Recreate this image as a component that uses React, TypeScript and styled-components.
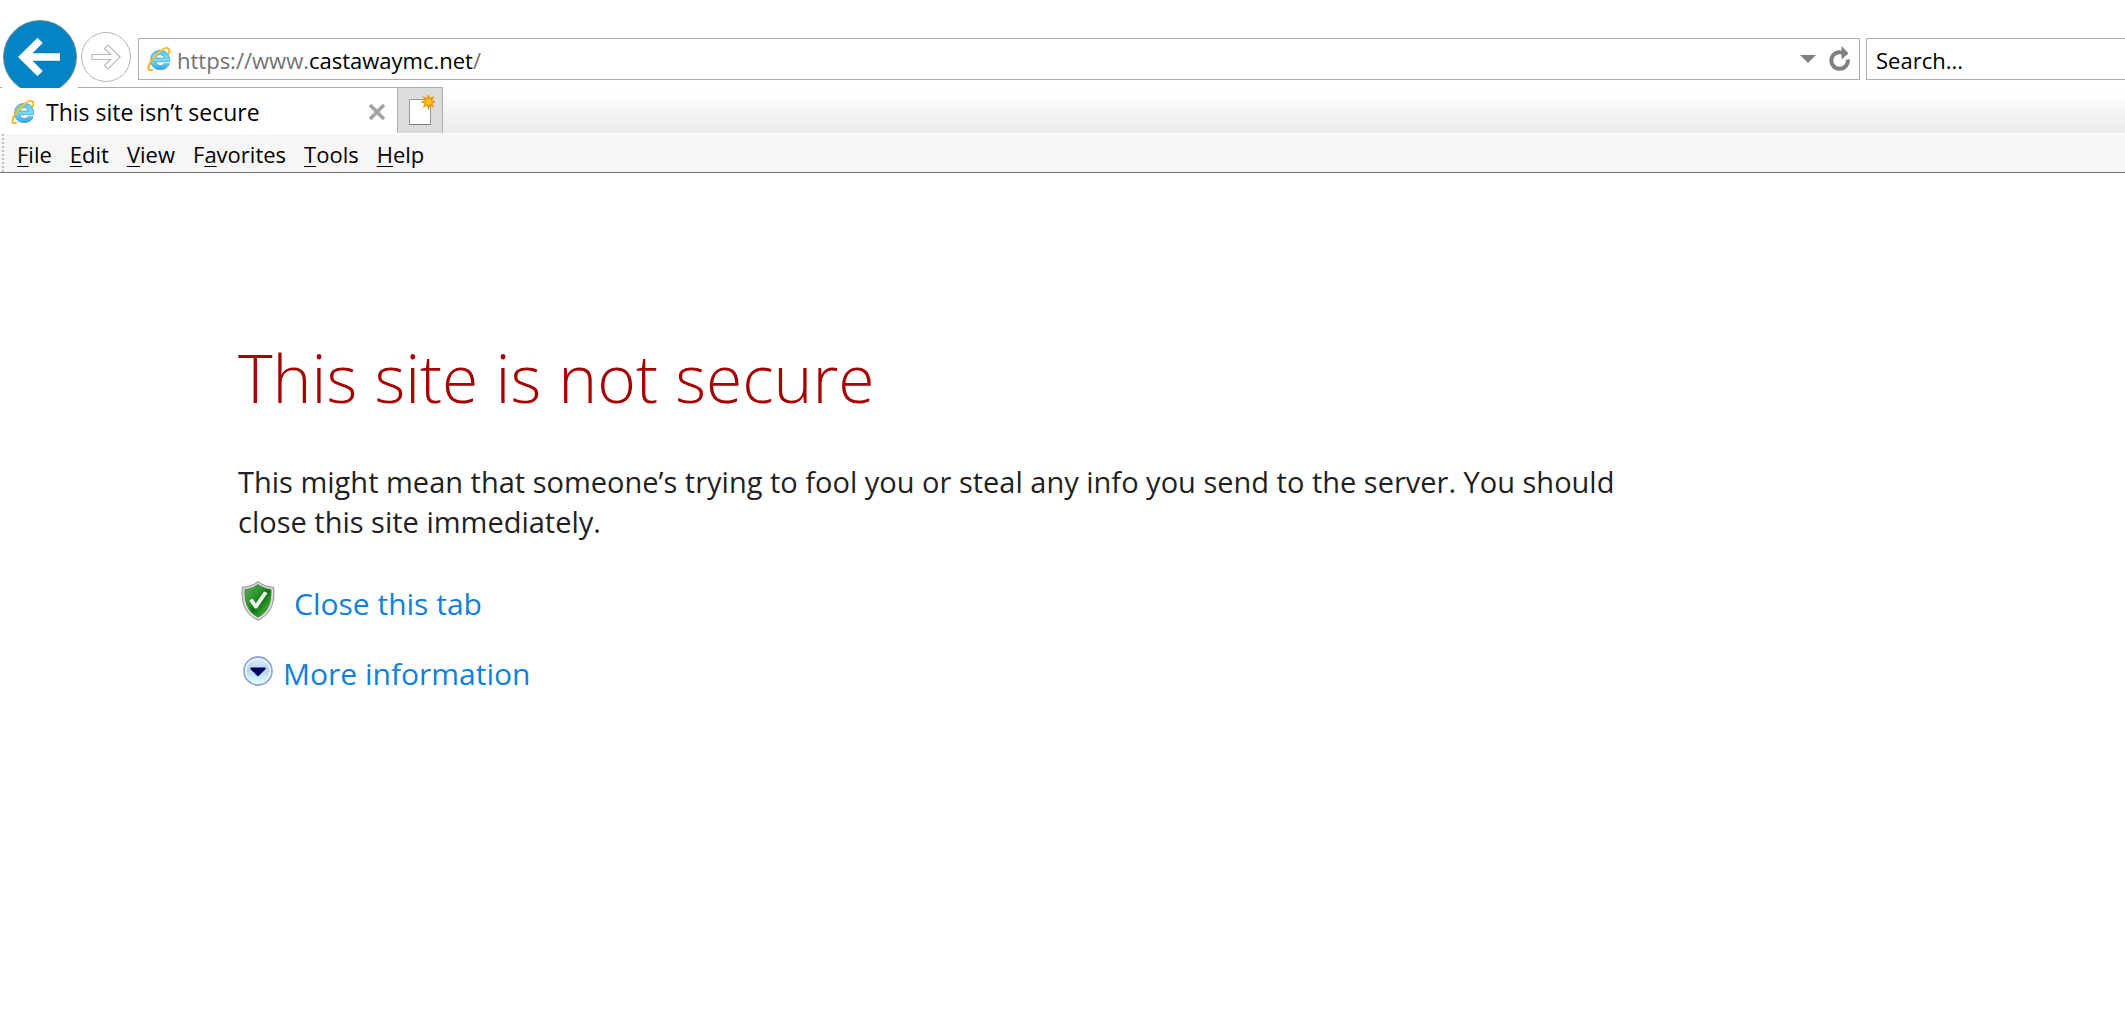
import React from "react";
import styled, { createGlobalStyle } from "styled-components";

const Global = createGlobalStyle`
  * { box-sizing: border-box; }
  body {
    margin: 0;
    background: #fff;
    color: #000;
    font-family: "Open Sans", "Noto Sans", sans-serif;
    font-size: 22px;
  }
  button, input { font: inherit; color: inherit; }
`;

const PlainButton = styled.button`
  display: flex;
  align-items: center;
  justify-content: center;
  flex: none;
  padding: 0;
  border: 0;
  background: none;
  cursor: pointer;
`;

const NavBar = styled.div`
  display: flex;
  align-items: flex-start;
  height: 87px;
  padding-left: 2px;
`;

const BackSlot = styled.div`
  position: relative;
  z-index: 1;
  flex: none;
  width: 76px;
  height: 88px;
  padding: 20px 1px 0;
  overflow: hidden;
  background: #fff;
`;

const BackButton = styled(PlainButton)`
  width: 74px;
  height: 74px;
  padding-right: 2px;
  border: 1px solid #7a8a94;
  border-radius: 50%;
  background: #0384c4;
`;

const ForwardButton = styled(PlainButton)`
  width: 50px;
  height: 50px;
  margin: 32px 7px 0 3px;
  border: 1px solid #b5b5b5;
  border-radius: 50%;
`;

const Field = styled.div`
  display: flex;
  align-items: center;
  height: 42px;
  margin-top: 38px;
  border: 1px solid #adadad;
  background: #fff;
`;

const AddressField = styled(Field)`
  flex: 1;
  min-width: 0;
  gap: 6px;
  padding: 0 8px;
`;

const Address = styled.div`
  flex: 1;
  min-width: 0;
  padding-top: 2px;
  overflow: hidden;
  white-space: nowrap;
  line-height: 38px;
  color: #737373;
  outline: none;
`;

const Host = styled.span`
  color: #000;
`;

const FieldActions = styled.div`
  display: flex;
  align-items: center;
  gap: 13px;
`;

const SearchField = styled(Field)`
  flex: none;
  width: 259px;
  margin-left: 6px;
  border-right: 0;
`;

const SearchInput = styled.input`
  width: 100%;
  height: 40px;
  padding: 2px 9px 0;
  border: 0;
  outline: none;
  background: none;
  &::placeholder { color: #000; opacity: 1; }
`;

const TabStrip = styled.div`
  display: flex;
  height: 47px;
  border-bottom: 1px solid #fff;
  background: linear-gradient(#fff 8%, #ebebeb);
`;

const Tab = styled.div`
  display: flex;
  align-items: center;
  gap: 11px;
  width: 397px;
  padding: 2px 11px 0;
  border-top: 1px solid #adadad;
  background: #fff;
`;

const TabTitle = styled.span`
  flex: 1;
  font-size: 23px;
  white-space: nowrap;
`;

const NewTabButton = styled(PlainButton)`
  width: 46px;
  border: 1px solid #adadad;
  border-bottom: 0;
  background: #dcdcdc;
`;

const MenuBar = styled.nav`
  display: flex;
  align-items: center;
  gap: 18px;
  height: 39px;
  padding-left: 2px;
  border-bottom: 1px solid #6f6f6f;
  background: #f6f6f6;
`;

const Grip = styled.span`
  align-self: stretch;
  margin-right: -5px;
  border-left: 2px dotted #bdbdbd;
`;

const MenuItem = styled(PlainButton)`
  display: block;
  padding-top: 2px;
  line-height: 36px;
  u { text-underline-offset: 3px; text-decoration-thickness: 1px; }
`;

const Page = styled.main`
  max-width: 1640px;
  padding: 154px 0 0 238px;
`;

const Title = styled.h1`
  margin: 0;
  font-size: 66px;
  font-weight: 300;
  line-height: 100px;
  color: #a80000;
`;

const Message = styled.p`
  margin: 35px 0 24px;
  font-size: 29px;
  line-height: 40px;
  color: #1f1f1f;
`;

const Action = styled.div`
  display: flex;
  align-items: center;
  height: 70px;
  font-size: 30px;
`;

const ActionIcon = styled.span<{ $gap: number }>`
  display: flex;
  justify-content: center;
  width: 40px;
  margin-right: ${(p) => p.$gap}px;
`;

const ActionLink = styled.a`
  color: #0f80dd;
  line-height: 40px;
  padding-top: 6px;
  text-decoration: none;
`;

function ExplorerIcon({ id }: { id: string }) {
  return (
    <svg width="24" height="24" viewBox="0 0 24 24" aria-hidden="true">
      <defs>
        <linearGradient id={id} x1="0" y1="0" x2="0" y2="1">
          <stop offset="0" stopColor="#5cc4f0" />
          <stop offset="0.5" stopColor="#7adcfc" />
          <stop offset="1" stopColor="#2fa4e0" />
        </linearGradient>
      </defs>
      <path
        d="M22.6 14.8H9c.3 2.200 2 3.600 4.300 3.600 1.700 0 2.900-.6 3.600-1.700h5.300c-1.200 3.700-4.600 6-9 6-5.600 0-9.600-3.900-9.600-9.700S7.600 3.300 13.100 3.300c5.700 0 9.600 4 9.600 9.900zM9 11h8.200c-.3-2-1.900-3.300-4.100-3.300S9.400 9 9 11z"
        fill={`url(#${id})`}
        stroke="#3d95cc"
        strokeWidth="0.7"
      />
      <path
        d="M21.900 6.200c.9-2.700.5-4.800-1.300-5.100C17 .5 10.400 5.200 6 11.400 2.200 16.700.5 21.700 2.200 23c.7.5 1.800.3 3-.3"
        fill="none"
        stroke="#f3b51b"
        strokeWidth="1.900"
        strokeLinecap="round"
      />
      <path d="M20 1.300C16.500 1.500 11 5.500 7 10.500" fill="none" stroke="#ffdc4a" strokeWidth="1" />
    </svg>
  );
}

function ShieldIcon() {
  return (
    <svg width="34" height="40" viewBox="0 0 34 40" aria-hidden="true">
      <defs>
        <linearGradient id="shield" x1="0" y1="0" x2="1" y2="1">
          <stop offset="0" stopColor="#5fb057" />
          <stop offset="0.4" stopColor="#27922a" />
          <stop offset="0.55" stopColor="#08740b" />
          <stop offset="1" stopColor="#6fd05c" />
        </linearGradient>
      </defs>
      <path
        d="M17 .7C13 4 7 6 1.300 6.300.2 21 3 32.500 17 39.300 31 32.500 33.800 21 32.700 6.300 27 6 21 4 17 .7z"
        fill="#d9d9d9"
        stroke="#8c8c8c"
        strokeWidth="1"
      />
      <path
        d="M17 3.600c-4 2.800-8.500 4.500-13 5C3.600 20.500 6 30.300 17 36.200 28 30.300 30.400 20.500 30 8.600c-4.500-.5-9-2.200-13-5z"
        fill="url(#shield)"
        stroke="#47803f"
        strokeWidth="0.8"
      />
      <path d="M8.300 19.600l3.200-2 3.300 4.600L23 10.400l3.600 1.700L16 27.400h-2.300z" fill="#f1f1f1" />
    </svg>
  );
}

function ExpandIcon() {
  return (
    <svg width="30" height="30" viewBox="0 0 30 30" aria-hidden="true">
      <defs>
        <linearGradient id="orb" x1="0" y1="0" x2="0" y2="1">
          <stop offset="0" stopColor="#dce9fa" />
          <stop offset="0.45" stopColor="#b5d5ee" />
          <stop offset="1" stopColor="#d7fbff" />
        </linearGradient>
      </defs>
      <circle cx="15" cy="15" r="14" fill="#f2f8ff" stroke="#8fa9d6" strokeWidth="1.800" />
      <circle cx="15" cy="15" r="11.500" fill="url(#orb)" />
      <path d="M7.500 11.500h15v1.800L15 20.500l-7.500-7.200z" fill="#00005f" />
    </svg>
  );
}

const menus: [string, string, string][] = [
  ["", "F", "ile"],
  ["", "E", "dit"],
  ["", "V", "iew"],
  ["F", "a", "vorites"],
  ["", "T", "ools"],
  ["", "H", "elp"],
];

export default function App() {
  return (
    <>
      <Global />
      <header>
        <NavBar>
          <BackSlot>
            <BackButton aria-label="Back">
              <svg width="42" height="40" viewBox="0 0 42 40" aria-hidden="true">
                <path d="M0 20L19.300 1h.4l5 5L14.500 16.300H42v7.400H14.500L24.700 34l-5 5h-.4z" fill="#fff" />
              </svg>
            </BackButton>
          </BackSlot>
          <ForwardButton aria-label="Forward">
            <svg width="30" height="26" viewBox="0 0 30 26" aria-hidden="true">
              <path
                d="M29 13L17 1l-3.500 3.500 6 6H1v5h18.500l-6 6L17 25z"
                fill="none"
                stroke="#b9b9b9"
                strokeWidth="1.200"
              />
            </svg>
          </ForwardButton>
          <AddressField>
            <ExplorerIcon id="explorerAddress" />
            <Address role="textbox" aria-label="Address" contentEditable suppressContentEditableWarning spellCheck={false}>
              https://www.<Host>castawaymc.net</Host>/
            </Address>
            <FieldActions>
              <PlainButton aria-label="Show address bar suggestions">
                <svg width="16" height="8" viewBox="0 0 16 8" aria-hidden="true">
                  <path d="M0 0h16L8 8z" fill="#808080" />
                </svg>
              </PlainButton>
              <PlainButton aria-label="Refresh">
                <svg width="22" height="26" viewBox="0 0 22 26" aria-hidden="true">
                  <path d="M13.500 6.700A8.300 8.300 0 1 0 18.900 13.500" fill="none" stroke="#808080" strokeWidth="4" />
                  <path d="M12.500 0l7 7.200-7 6.300z" fill="#808080" />
                </svg>
              </PlainButton>
            </FieldActions>
          </AddressField>
          <SearchField>
            <SearchInput type="text" aria-label="Search" placeholder="Search..." />
          </SearchField>
        </NavBar>
        <TabStrip>
          <Tab>
            <ExplorerIcon id="explorerTab" />
            <TabTitle>This site isn’t secure</TabTitle>
            <PlainButton aria-label="Close tab">
              <svg width="18" height="18" viewBox="0 0 18 18" aria-hidden="true">
                <path d="M2 2l14 14M16 2L2 16" stroke="#a3a3a3" strokeWidth="3.600" />
              </svg>
            </PlainButton>
          </Tab>
          <NewTabButton aria-label="New tab">
            <svg width="30" height="32" viewBox="0 0 30 32" aria-hidden="true">
              <path d="M4.500 4.500h21v25h-21z" fill="#fff" stroke="#9a9a9a" />
              <path d="M4 29.500h22" stroke="#777" />
              <path
                d="M23.500 .5l1.200 3.300 3.400-1.600-1.500 3.300 3.300 1.400-3.300 1.300 1.500 3.300-3.400-1.500-1.200 3.400-1.300-3.400-3.300 1.500 1.500-3.300L17 6.900l3.400-1.400-1.500-3.300 3.300 1.600z"
                fill="#ffa810"
                stroke="#f0940c"
                strokeWidth="1.200"
              />
              <circle cx="23.500" cy="7" r="2.800" fill="#ffc61a" />
            </svg>
          </NewTabButton>
        </TabStrip>
        <MenuBar aria-label="Menu">
          <Grip />
          {menus.map(([before, key, after]) => (
            <MenuItem key={before + key + after}>
              {before}
              <u>{key}</u>
              {after}
            </MenuItem>
          ))}
        </MenuBar>
      </header>
      <Page>
        <Title>This site is not secure</Title>
        <Message>
          This might mean that someone’s trying to fool you or steal any info you send to the server. You should close
          this site immediately.
        </Message>
        <Action>
          <ActionIcon $gap={16}>
            <ShieldIcon />
          </ActionIcon>
          <ActionLink href="#close">Close this tab</ActionLink>
        </Action>
        <Action>
          <ActionIcon $gap={5}>
            <ExpandIcon />
          </ActionIcon>
          <ActionLink href="#more">More information</ActionLink>
        </Action>
      </Page>
    </>
  );
}
